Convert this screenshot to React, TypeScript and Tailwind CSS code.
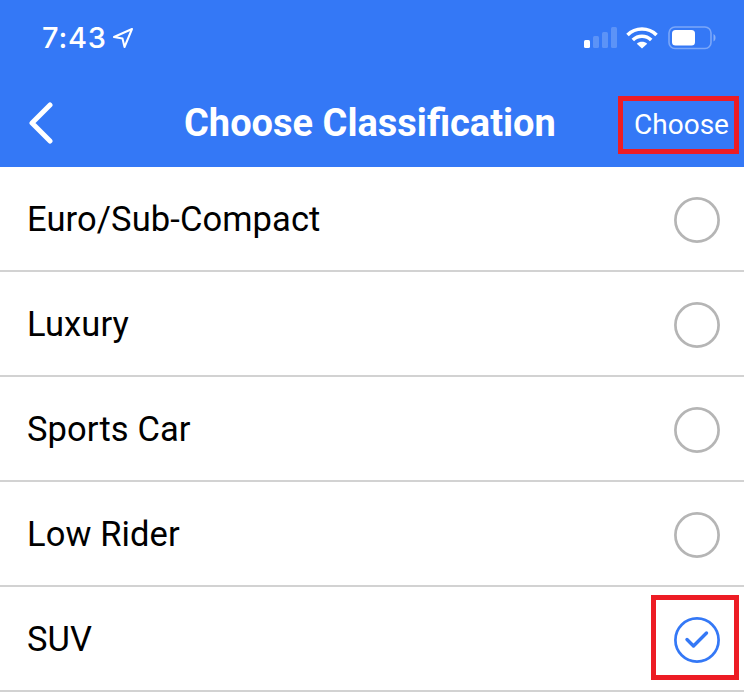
const rows = [
  { label: "Euro/Sub-Compact", checked: false },
  { label: "Luxury", checked: false },
  { label: "Sports Car", checked: false },
  { label: "Low Rider", checked: false },
  { label: "SUV", checked: true },
]

function SignalBars() {
  return (
    <svg width="33" height="22" viewBox="0 0 33 22" fill="#fff" className="mr-[-1px]">
      <rect x="0" y="13" width="6" height="8" rx="1.5" />
      <rect x="9" y="9" width="6" height="12" rx="1.5" opacity="0.2" />
      <rect x="18" y="5" width="6" height="16" rx="1.5" opacity="0.2" />
      <rect x="27" y="0" width="6" height="21" rx="1.5" opacity="0.2" />
    </svg>
  )
}

function Wifi() {
  return (
    <svg width="32" height="22" viewBox="0 0 32 22" fill="none" stroke="#fff" strokeWidth="3.6">
      <path d="M1.5 8 C9.5 0 22.5 0 30.5 8" />
      <path d="M6.8 13 C12 8 20 8 25.2 13" />
      <path d="M16 21.5 L10.8 16.8 C13.8 14.2 18.2 14.2 21.2 16.8 Z" fill="#fff" stroke="none" />
    </svg>
  )
}

function Battery() {
  return (
    <svg width="48" height="24" viewBox="0 0 48 24" fill="none">
      <rect x="1" y="1" width="42" height="21.5" rx="6" stroke="#fff" strokeOpacity="0.35" strokeWidth="1.6" />
      <rect x="4" y="4" width="23" height="15.5" rx="3.5" fill="#fff" />
      <path d="M45.5 8 C47 9 47.5 10 47.5 11.7 C47.5 13.4 47 14.5 45.5 15.5 Z" fill="#fff" fillOpacity="0.4" />
    </svg>
  )
}

function LocationArrow() {
  return (
    <svg width="22" height="22" viewBox="0 0 22 22" fill="none" stroke="#fff" strokeWidth="2" strokeLinejoin="round">
      <path d="M20 2 L2 10 L10.5 11.5 L12.5 20 Z" />
    </svg>
  )
}

function Radio({ checked }: { checked: boolean }) {
  if (checked) {
    return (
      <svg width="46" height="46" viewBox="0 0 46 46" fill="none" stroke="#3478f6" strokeLinecap="round" strokeLinejoin="round">
        <circle cx="23" cy="23" r="21.6" strokeWidth="2.7" />
        <path d="M13 22.5 L19.5 29 L32.5 16" strokeWidth="3.4" />
      </svg>
    )
  }
  return (
    <svg width="46" height="46" viewBox="0 0 46 46" fill="none" stroke="#b5b5b5">
      <circle cx="23" cy="23" r="21.6" strokeWidth="2.7" />
    </svg>
  )
}

export default function App() {
  return (
    <div className="w-[744px] h-[696px] overflow-hidden bg-white font-['Roboto',sans-serif]">
      <div className="h-[167px] bg-[#3478f6] text-white">
        <div className="h-[74px] pl-[42px] pr-[28px] flex items-center justify-between pt-[1px]">
          <div className="flex items-center gap-[5px]">
            <span className="font-['Inter',sans-serif] text-[29px] font-medium leading-none tracking-[0.8px]">7:43</span>
            <LocationArrow />
          </div>
          <div className="flex items-center gap-[10px]">
            <SignalBars />
            <Wifi />
            <Battery />
          </div>
        </div>
        <div className="relative h-[93px] flex items-center pl-[29px] pt-[5px]">
          <svg width="24" height="42" viewBox="0 0 24 42" fill="none" stroke="#fff" strokeWidth="5" strokeLinecap="round" strokeLinejoin="round">
            <path d="M21 3 L3 21 L21 39" />
          </svg>
          <h1 className="ml-[131px] text-[38px] font-bold leading-none">Choose Classification</h1>
          <div className="absolute left-[618px] top-[22px] w-[121px] h-[58px] border-[5px] border-[#ed1c24] flex items-center justify-center pl-[6px]">
            <span className="text-[28px] font-normal leading-none">Choose</span>
          </div>
        </div>
      </div>
      <div>
        {rows.map((row) => (
          <div key={row.label} className="relative h-[105px] border-b-2 border-[#d2d2d2] pl-[27px] pr-[24px] flex items-center justify-between">
            <span className="text-[34.5px] pt-[2px] leading-none tracking-[0.1px] text-black">{row.label}</span>
            <span className="pt-[2px]">
              <Radio checked={row.checked} />
            </span>
            {row.checked && <div className="absolute left-[651px] top-[8px] w-[88px] h-[85px] border-[5px] border-[#ed1c24]" />}
          </div>
        ))}
      </div>
    </div>
  )
}
